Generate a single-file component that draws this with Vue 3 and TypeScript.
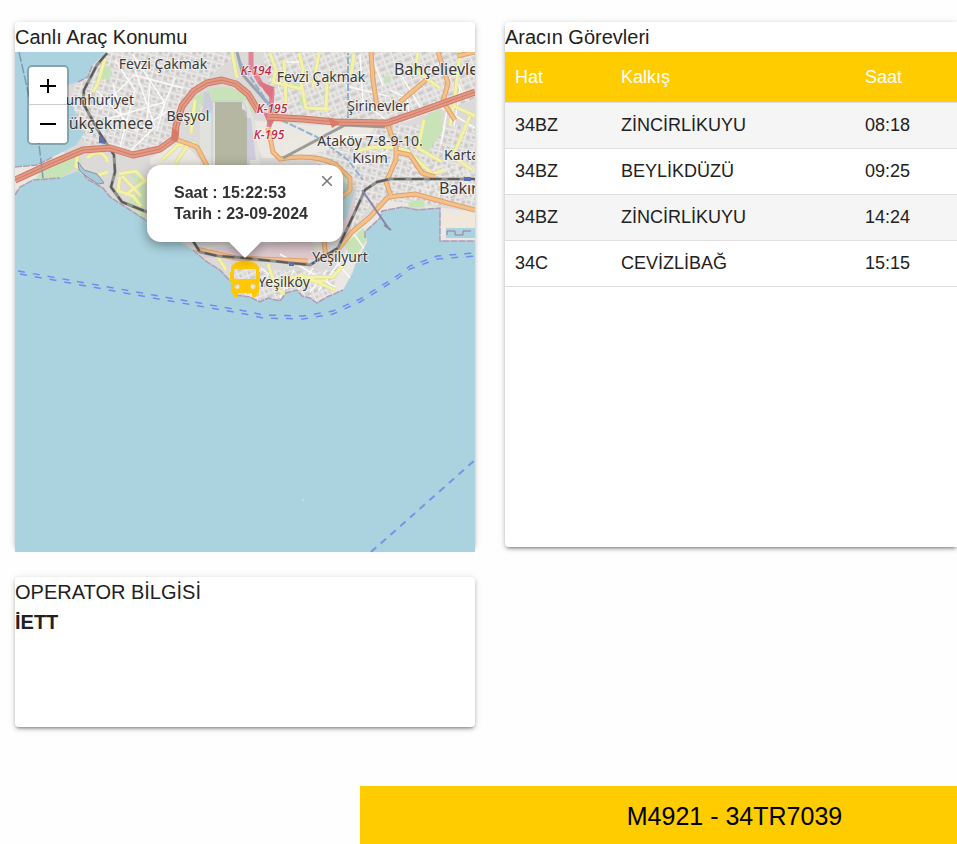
<script setup lang="ts">
import { ref } from 'vue'

interface Task {
  line: string
  departure: string
  time: string
}

interface Place {
  name: string
  x: number
  y: number
  size: 'small' | 'large' | 'road'
  anchor?: 'start' | 'end'
}

const tasks: Task[] = [
  { line: '34BZ', departure: 'ZİNCİRLİKUYU', time: '08:18' },
  { line: '34BZ', departure: 'BEYLİKDÜZÜ', time: '09:25' },
  { line: '34BZ', departure: 'ZİNCİRLİKUYU', time: '14:24' },
  { line: '34C', departure: 'CEVİZLİBAĞ', time: '15:15' },
]

const places: Place[] = [
  { name: 'Fevzi Çakmak', x: 163, y: 69, size: 'small' },
  { name: 'Fevzi Çakmak', x: 321, y: 82, size: 'small' },
  { name: 'umhuriyet', x: 134, y: 105, size: 'small', anchor: 'end' },
  { name: 'ükçekmece', x: 153, y: 129, size: 'large', anchor: 'end' },
  { name: 'Beşyol', x: 188, y: 121, size: 'small' },
  { name: 'Bahçelievle', x: 394, y: 75, size: 'large', anchor: 'start' },
  { name: 'Şirinevler', x: 378, y: 111, size: 'small' },
  { name: 'Ataköy 7-8-9-10.', x: 370, y: 146, size: 'small' },
  { name: 'Kısım', x: 370, y: 163, size: 'small' },
  { name: 'Karta', x: 444, y: 160, size: 'small', anchor: 'start' },
  { name: 'Bakır', x: 439, y: 194, size: 'large', anchor: 'start' },
  { name: 'Yeşilyurt', x: 340, y: 262, size: 'small' },
  { name: 'Yeşilköy', x: 284, y: 287, size: 'small' },
  { name: 'K-194', x: 256, y: 75, size: 'road' },
  { name: 'K-195', x: 272, y: 113, size: 'road' },
  { name: 'K-195', x: 269, y: 139, size: 'road' },
]

const tertiary =
  'M105 58L98 83 93 92M78 151Q94 144 106 150M78 151L76 166 91 177 108 172M87 158Q102 146 108 162M119 174L136 171 145 181 125 195M120 177L118 191 133 196 141 206M122 176L141 196M162 160L178 145 195 143M175 164L190 142M195 100L191 133' +
  'M232 52L237 78M270 53L276 70 273 82 302 89M299 53L303 69 301 83 306 108 330 109M319 53L313 87M327 79L326 112M354 54L351 76M284 60L286 103' +
  'M418 53L415 70 440 88M460 52L454 106 475 116M453 106L450 126M358 151Q380 143 408 151L432 174 444 170M424 120L418 148 442 162M470 116L453 156 472 170' +
  'M268 264L276 288 290 298M285 277H333L344 264M275 287L301 275 335 290M207 249L218 257 226 270M265 281H326'

const secondary =
  'M371 52L373 80 377 106M438 52L448 83 443 102 455 120M475 52L457 56M400 102L426 80M387 123L396 147 396 160 386 182 391 196' +
  'M268 128L273 152 280 159Q312 153 335 164L350 178 350 190 342 197M396 152L410 155 422 173 435 177' +
  'M475 210L448 203 415 194 388 197 370 217 352 232 340 247 328 262M175 139L197 147 207 166M196 249L235 258 308 261M324 241L326 258'

const railway =
  'M107 53L97 65 84 90 83 103 99 132 114 155 115 172 111 187 122 202 147 212M193 241L200 252 218 256 245 258 310 265 338 248 354 214 365 190 377 182 390 179H475'

const motorway =
  'M15 180L50 164 83 150 110 148 133 155 160 149 175 138 176 126 182 106 194 91 207 83 222 80 236 84 248 94 259 112M267 117L303 119 335 122 387 123 413 114 475 92'

const popupOpen = ref(true)
</script>

<template>
  <div class="page">
    <main class="grid">
      <section class="card tall">
        <h2 class="title">Canlı Araç Konumu</h2>
        <div class="map">
          <svg class="tiles" viewBox="15 52 460 500" preserveAspectRatio="xMidYMid slice" aria-hidden="true">
            <defs>
              <pattern id="streets-a" width="11" height="8" patternUnits="userSpaceOnUse" patternTransform="rotate(14)">
                <path d="M0 .5H11M.5 0V8M6 0V5M6 5H11" stroke="#eeedec" stroke-width="1" fill="none" />
                <path d="M2 3H5V6H2ZM7 2H10V4H7Z" fill="#cbc8c6" />
              </pattern>
              <pattern id="streets-b" width="9" height="12" patternUnits="userSpaceOnUse" patternTransform="rotate(-22)">
                <path d="M0 .5H9M.5 0V12M0 7H9M5 7V12" stroke="#eeedec" stroke-width="1" fill="none" />
                <path d="M2 3H7V5H2ZM2 9H4V11H2Z" fill="#cbc9c8" />
              </pattern>
              <clipPath id="land-clip">
                <path d="M107 52L93 65 88 77 78 82 68 85 64 92 68 97 74 108 78 122 84 132 81 138 76 145 53 157 37 165 15 167V195L20 187 33 180 60 178 78 171 87 179 103 188 110 197 127 208 147 221 193 250 207 262 220 270 230 281 235 295 250 297 260 302 268 298 280 301 286 293 297 290 302 296 310 298 317 303 327 297 343 290 353 273 355 265 367 242 365 232 380 218 382 211 403 207 417 210 440 208V241H475V52Z" />
              </clipPath>
            </defs>
            <rect x="15" y="52" width="460" height="500" fill="#aad3df" />
            <g clip-path="url(#land-clip)">
              <rect x="15" y="52" width="460" height="260" fill="#dcdad8" />
              <path d="M85 52H240L205 80 183 112 172 142 130 155 85 145 68 110Z" fill="url(#streets-a)" />
              <path d="M262 52H475V100L395 125 275 118Z" fill="url(#streets-b)" />
              <path d="M300 125H475V205H370L350 235 330 190Z" fill="url(#streets-a)" />
              <path d="M230 268L330 272 350 262 335 302H240Z" fill="url(#streets-b)" />
              <path d="M410 165H475V200L410 195Z" fill="url(#streets-b)" />
              <path d="M15 165L48 157 62 150 70 160 50 172 15 190ZM150 158L182 140 204 165H150ZM247 120L275 122 345 128 285 158H262ZM352 232L385 200 475 212V240H440V208L403 207 365 233 367 242 352 272 343 290 330 296Z" fill="#ebe8e3" />

              <!-- Parks, airport ground and industrial areas -->
              <g fill="#c8e3b7">
                <path d="M44 165L78 150 82 164 60 178 35 180Z" />
                <path d="M101 68L110 66 112 77 102 80ZM128 170L146 184V220L125 204 140 190Z" />
                <path d="M195 97Q220 80 242 93L254 112 248 122 244 103H216L212 106 197 104ZM190 112L195 96 200 110 192 128Z" />
                <path d="M218 272L231 278 233 295 210 268ZM352 263L370 235 363 228 345 245Z" />
                <path d="M424 118L440 108 443 131 426 155 416 144ZM408 202L423 199 425 207 409 208Z" />
                <path d="M335 170L347 175 345 192 336 196ZM299 95L308 98 306 107 300 105Z" />
                <path d="M384 77L391 76 390 83 385 82ZM293 82L303 84 301 90 292 88Z" />
                <path d="M276 242L310 241 318 248 300 252Z" />
              </g>
              <path d="M200 108L216 101H247L256 125 260 166H200Z" fill="#e2e2dd" />
              <path d="M204 92H209L213 107 211 113H201L203 108ZM247 118H251L256 160H250V165H247Z" fill="#cecbdf" />
              <path d="M215 102H242V109L247 112V166H215Z" fill="#b5b7a2" />
              <path d="M212 165V103Q213 101 217 101H241Q246 103 246 110V116" fill="none" stroke="#c5c9d8" stroke-width="1" />
              <path d="M335 180L357 187 350 235 340 242Z" fill="#ddcbd4" />
              <path d="M345 183L355 190 346 220 336 214Z" fill="#acd1d4" />
              <path d="M197 250L310 240 320 260 238 258 205 258Z" fill="#dfcad0" />
              <path d="M284 142L326 124 377 126 368 136 324 151 284 161Z" fill="#ebe9e1" />
              <path d="M443 213H475V227H461L443 235Z" fill="#efe8db" />

              <!-- White minor streets -->
              <g fill="none" stroke="#fbfaf8" stroke-width="1.5">
                <path d="M115 60L135 90 120 147M133 55L165 103 157 130M100 109L134 75 183 88M104 120L165 102M97 91L136 131 170 110M135 70L155 127 126 155M150 84L146 132M113 84L123 121M175 78L160 115" />
                <path d="M282 62H303M360 54L363 102 386 120M395 65L422 110M403 99L440 62M346 86L387 96M390 90L407 98 410 120M460 88L454 126M448 104L441 144M433 102L475 128M373 60L383 86M451 66L466 101" />
                <path d="M261 268L288 289M294 270L280 298M313 268L298 290M327 270L310 292M344 256L318 291M337 263L353 281M351 230L366 251M280 254L335 287" />
                <path d="M331 142Q350 132 382 136Q392 141 386 152L350 166" />
              </g>
              <!-- Yellow tertiary roads -->
              <path :d="tertiary" fill="none" stroke="#d9da96" stroke-width="4" />
              <path :d="tertiary" fill="none" stroke="#f4f2a8" stroke-width="3" />
              <!-- Orange secondary roads -->
              <path :d="secondary" fill="none" stroke="#dda36b" stroke-width="5" stroke-linejoin="round" />
              <path :d="secondary" fill="none" stroke="#f5c08a" stroke-width="3" stroke-linejoin="round" />
              <!-- Railways -->
              <path d="M283 158L345 125 385 127" fill="none" stroke="#9b9b99" stroke-width="3" />
              <path :d="railway" fill="none" stroke="#92918e" stroke-width="3" stroke-linejoin="round" />
              <path :d="railway" fill="none" stroke="#5c5b59" stroke-width="2" stroke-dasharray="12 6" />
              <path d="M237 52L243 75 278 115" fill="none" stroke="#9ba3ac" stroke-width="3" />
              <path d="M251 52V66L261 84 272 91 271 113 269 127" fill="none" stroke="#e08496" stroke-width="5" />
              <path d="M258 81L274 87 272 100 265 92ZM263 112L277 116 270 128Z" fill="#dc7486" />
              <path d="M240 62L279 119 317 137 348 160 363 180M348 118V53" fill="none" stroke="#8fb2cc" stroke-width="2" stroke-dasharray="7 2" />
              <!-- Motorways -->
              <path :d="motorway" fill="none" stroke="#cf7966" stroke-width="7" stroke-linejoin="round" />
              <path :d="motorway" fill="none" stroke="#e39983" stroke-width="5" stroke-linejoin="round" />
              <path :d="motorway" fill="none" stroke="#cf7c69" stroke-width="1" />
              <path d="M172 128L179 132 177 142 171 140ZM328 117L340 123 332 128Z" fill="#d97a68" />
              <path d="M446 228H475V238H446Z" fill="#aad3df" />
              <path d="M447 235V231H455V235H463V231H471" fill="none" stroke="#927b96" />
            </g>
            <!-- Shore edges and administrative boundaries -->
            <g fill="none" stroke="#b09cb8" stroke-width="1.5">
              <path d="M78 82L88 77 92 66M15 167L37 165 53 157M15 195L20 187 33 180 60 178M83 173L87 179 103 188 110 197 127 208 147 221M193 250L207 262 220 270 230 281M235 295L250 297 260 302 268 298 280 301 286 293 297 290 302 296 310 298 317 303 327 297 343 290M365 238V232L380 218 382 211 403 207 417 210 440 208V241H475" stroke-dasharray="7 1" />
              <path d="M19 52L38 136 43 178" stroke="#7f98b5" stroke-dasharray="10 2" />
              <path d="M362 190L389 229M384 225L391 230" stroke="#8a86a8" stroke-width="2" />
            </g>
            <path d="M99 136L104 137 105 144 99 143ZM289 262H294V266H289ZM464 177H471V181H464Z" fill="#5c6fa8" />
            <path d="M78 162L84 170 97 174 104 183 98 184 86 176 79 170Z" fill="#a7cbd7" stroke="#8a8db0" />
            <!-- Ferry routes -->
            <g fill="none" stroke="#6f8bf0" stroke-width="1.5">
              <g stroke-dasharray="7 8">
                <path d="M18 271L153 295 245 311 263 315 303 316 333 311 360 299 397 276 410 266 437 256 475 253" />
                <path d="M20 274L153 298 245 314 263 318 303 319 333 314 360 302 397 279 410 269 437 259 475 256" />
              </g>
              <path d="M371 552L475 460" stroke="#7893e5" stroke-width="2" stroke-dasharray="7 6" />
            </g>
            <text
              v-for="(place, index) in places"
              :key="index"
              :x="place.x"
              :y="place.y"
              :text-anchor="place.anchor ?? 'middle'"
              :class="['place', place.size]"
            >{{ place.name }}</text>
            <circle cx="303" cy="500" r=".7" fill="#eef5f6" />
          </svg>

          <div class="zoom">
            <button type="button" aria-label="Yakınlaştır">
              <svg width="16" height="16" viewBox="0 0 16 16"><path d="M8 1V15M0 8H16" /></svg>
            </button>
            <button type="button" aria-label="Uzaklaştır">
              <svg width="16" height="16" viewBox="0 0 16 16"><path d="M0 8H16" /></svg>
            </button>
          </div>

          <button class="bus" type="button" aria-label="Otobüs" @click="popupOpen = true">
            <svg width="30" height="38" viewBox="0 0 30 38">
              <path
                fill="#ffc800"
                fill-rule="evenodd"
                d="M5 3Q15-1 25 3 29 5 29 9V12H30V22H29V33H27V35Q27 37 25 37H23Q22 37 22 35V33H8V35Q8 37 7 37H5Q3 37 3 35V33H1V22H0V12H1V9Q1 5 5 3ZM5 9Q4 9 4 11V17Q4 19 5 19H25Q26 19 26 17V11Q26 9 25 9ZM7 24A2.5 2.5 0 1 0 7 29A2.5 2.5 0 1 0 7 24ZM23 24A2.5 2.5 0 1 0 23 29A2.5 2.5 0 1 0 23 24Z"
              />
            </svg>
          </button>

          <div v-if="popupOpen" class="popup">
            <div class="bubble">
              <p>Saat : 15:22:53</p>
              <p>Tarih : 23-09-2024</p>
            </div>
            <svg class="tip" width="34" height="17" viewBox="0 0 34 17" aria-hidden="true">
              <path d="M0 0H34L17 17Z" fill="#fff" />
            </svg>
            <button class="close" type="button" aria-label="Kapat" @click="popupOpen = false">
              <svg width="10" height="10" viewBox="0 0 10 10"><path d="M0 0L10 10M10 0L0 10" /></svg>
            </button>
          </div>
        </div>
      </section>

      <section class="card tall">
        <h2 class="title">Aracın Görevleri</h2>
        <table>
          <colgroup>
            <col class="col-line" />
            <col class="col-departure" />
            <col />
          </colgroup>
          <thead>
            <tr>
              <th scope="col">Hat</th>
              <th scope="col">Kalkış</th>
              <th scope="col">Saat</th>
            </tr>
          </thead>
          <tbody>
            <tr v-for="task in tasks" :key="task.time">
              <td>{{ task.line }}</td>
              <td>{{ task.departure }}</td>
              <td>{{ task.time }}</td>
            </tr>
          </tbody>
        </table>
      </section>

      <section class="card operator">
        <h2 class="title">OPERATOR BİLGİSİ</h2>
        <strong class="title">İETT</strong>
      </section>
    </main>

    <footer class="banner">M4921 - 34TR7039</footer>
  </div>
</template>

<style>
body {
  background: #fefefe;
}
</style>

<style scoped>
.page {
  padding-top: 22px;
  overflow: hidden;
  font-family: "Liberation Sans", Arial, sans-serif;
  color: #212121;
}

.grid {
  display: grid;
  grid-template-columns: minmax(0, 460fr) minmax(0, 452fr);
  gap: 30px;
  padding-left: 15px;
}

.card {
  min-width: 0;
  background: #fff;
  border-radius: 4px;
  box-shadow:
    0 3px 3px -2px rgba(0, 0, 0, 0.3),
    0 2px 4px rgba(0, 0, 0, 0.2),
    0 1px 8px rgba(0, 0, 0, 0.1);
}

.card:nth-child(2) {
  border-radius: 4px 0 0 4px;
}

.tall {
  height: 525px;
}

.operator {
  height: 150px;
}

.title {
  display: block;
  margin: 0;
  font-size: 20px;
  line-height: 30px;
  font-weight: 400;
}

strong.title {
  font-weight: 700;
}

.map {
  position: relative;
  height: 500px;
  overflow: hidden;
}

.tiles {
  display: block;
  width: 100%;
  height: 100%;
}

.place {
  font-family: "Noto Sans", sans-serif;
  fill: #3a3a3a;
  stroke: rgba(255, 255, 255, 0.5);
  stroke-width: 2px;
  paint-order: stroke;
}

.small {
  font-size: 14px;
}

.large {
  font-size: 16px;
}

.road {
  font-size: 12px;
  font-style: italic;
  font-weight: 500;
  fill: #bf2740;
}

button {
  display: flex;
  align-items: center;
  justify-content: center;
  padding: 0;
  border: 0;
  background: none;
  cursor: pointer;
}

.zoom {
  position: absolute;
  top: 13px;
  left: 12px;
  border: 2px solid rgba(0, 0, 0, 0.22);
  border-radius: 5px;
  background-clip: padding-box;
}

.zoom button {
  width: 38px;
  height: 38px;
  background: #fff;
  border-radius: 0 0 3px 3px;
}

.zoom button:first-child {
  border-bottom: 1px solid #ccc;
  border-radius: 3px 3px 0 0;
}

.zoom path {
  stroke: #000;
  stroke-width: 2;
}

.bus {
  position: absolute;
  top: 208px;
  left: 50%;
  margin-left: -15px;
}

.popup {
  position: absolute;
  top: 113px;
  left: 50%;
  transform: translateX(-50%);
  filter: drop-shadow(0 3px 6px rgba(0, 0, 0, 0.4));
}

.bubble {
  box-sizing: border-box;
  min-width: 196px;
  padding: 17px 27px 18px;
  background: #fff;
  border-radius: 14px;
  color: #333;
  font-size: 16px;
  font-weight: 700;
  line-height: 21px;
  white-space: nowrap;
}

.bubble p {
  margin: 0;
}

.tip {
  display: block;
  margin: -1px auto 0;
}

.close {
  position: absolute;
  top: 4px;
  right: 4px;
  width: 24px;
  height: 24px;
}

.close path {
  stroke: #757575;
  stroke-width: 1.5;
}

table {
  width: 100%;
  table-layout: fixed;
  border-collapse: separate;
  border-spacing: 0;
  font-size: 18px;
  line-height: 25px;
}

.col-line {
  width: 106px;
}

.col-departure {
  width: 244px;
}

th,
td {
  padding: 10px;
  border-bottom: 1px solid #dedede;
  text-align: left;
}

th {
  height: 30px;
  background: #fc0;
  color: #fff;
  font-weight: 400;
}

tbody tr:nth-child(odd) {
  background: #f5f5f5;
}

.banner {
  margin: 59px 0 0 360px;
  padding: 16px 0 14px 152px;
  background: #fc0;
  color: #000;
  font-size: 25px;
  line-height: 28px;
  text-align: center;
  white-space: nowrap;
}
</style>
